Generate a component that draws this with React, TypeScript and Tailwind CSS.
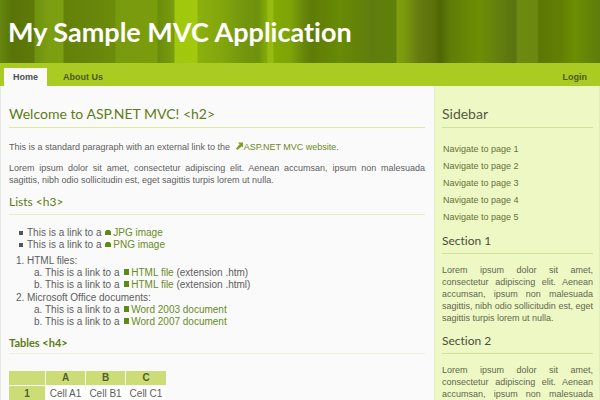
import React from "react";

type Stop = [number, string];

const stripes: Stop[] = [
  [0, "#66860e"], [6, "#5f7d0a"], [12, "#587408"], [34, "#5f7a06"],
  [35, "#6f9210"], [50, "#7c9f12"], [63, "#7c9f12"], [64, "#648208"], [90, "#67850a"], [115, "#6c8c0a"],
  [116, "#789a0e"], [157, "#7a9c0c"], [158, "#6a8c0c"], [174, "#7a9c0e"],
  [175, "#a2c80e"], [197, "#a3c90f"], [198, "#8cb00e"], [222, "#82a60c"], [240, "#76980e"], [258, "#6e900c"], [267, "#86ac04"],
  [268, "#96bc14"], [273, "#96bc14"], [274, "#82aa04"], [290, "#7ea406"],
  [304, "#66860a"], [312, "#5f7c06"], [340, "#688a04"], [372, "#5f7d0e"], [396, "#5f800a"],
  [397, "#7f9f0c"], [405, "#7a980e"], [418, "#667c10"], [434, "#5c700a"], [440, "#4e6604"], [450, "#5f7c06"],
  [480, "#6e8e04"], [500, "#627e10"], [516, "#5a7210"], [517, "#6c8a10"], [537, "#6c8810"],
  [539, "#5c7804"], [560, "#627e04"], [575, "#6c8e02"], [600, "#5e7c0a"],
];

function HeaderStripes() {
  return (
    <svg className="absolute inset-0 h-full w-full" viewBox="0 0 600 63" preserveAspectRatio="none" aria-hidden="true">
      <defs>
        <linearGradient id="stripes" x1="0" x2="1" y1="0" y2="0">
          {stripes.map(([x, color], i) => (
            <stop key={i} offset={x / 600} stopColor={color} />
          ))}
        </linearGradient>
      </defs>
      <rect width="600" height="63" fill="url(#stripes)" />
    </svg>
  );
}

function ExternalIcon() {
  return (
    <svg className="mr-px inline-block h-2 w-2 align-baseline" viewBox="0 0 8 8" aria-hidden="true">
      <path d="M3 0.500h5v5L6.700 4.200 2.500 8 1 6.700 4.600 2.300z" fill="#7aa02c" />
    </svg>
  );
}

function ImageIcon() {
  return (
    <svg className="mr-px inline-block h-2 w-2 align-baseline" viewBox="0 0 8 8" aria-hidden="true">
      <path d="M1 3.500L2.500 2h3L7 3.500V7H1z" fill="#5c8a14" />
    </svg>
  );
}

function FileIcon() {
  return (
    <svg className="mr-px inline-block h-2 w-2 align-baseline" viewBox="0 0 8 8" aria-hidden="true">
      <path d="M2 1h5v6H2z" fill="#5c8a14" />
    </svg>
  );
}

const heading = "font-['Lato',sans-serif]";
const link = "text-[#6b8a1e]";
const lorem =
  "Lorem ipsum dolor sit amet, consectetur adipiscing elit. Aenean accumsan, ipsum non malesuada sagittis, nibh odio sollicitudin est, eget sagittis turpis lorem ut nulla.";

function FileLink({ icon, label, suffix, bullet }: { icon: React.ReactNode; label: string; suffix?: string; bullet?: boolean }) {
  return (
    <li>
      {bullet && <span className="mr-1 inline-block size-1 bg-[#555] align-middle" />}
      This is a link to a{" "}
      <a href="#" className={link}>{icon}{label}</a>
      {suffix}
    </li>
  );
}

function SideSection({ title }: { title: string }) {
  return (
    <section>
      <h3 className={`${heading} border-b border-[#d2e29a] pb-1 text-xs leading-4 text-[#4a4f3a]`}>{title}</h3>
      <p className="mt-2.5 mb-[9px] text-justify">{lorem}</p>
    </section>
  );
}

export default function App() {
  return (
    <div className="flex h-screen flex-col overflow-hidden bg-[#fafafa] font-['Liberation_Sans',Arial,sans-serif] text-[9px] leading-3 text-[#5e5e5e] [font-variant-ligatures:none]">
      <header className="relative shrink-0">
        <HeaderStripes />
        <h1 className="relative px-2 pt-[14px] pb-[13px] font-['Lato',sans-serif] text-[27px] leading-9 font-bold text-white">
          My Sample MVC Application
        </h1>
      </header>
      <nav className="flex shrink-0 items-end bg-[#aacc22] pt-[5px] pr-1 pl-1 text-[9px] font-bold text-[#4d5a20]">
        <a href="#" className="bg-[#fafafa] px-[9px] py-[3px] text-[#455058]">Home</a>
        <a href="#" className="ml-[7px] px-[9px] py-[3px]">About Us</a>
        <a href="#" className="ml-auto px-[9px] py-[3px]">Login</a>
      </nav>
      <div className="flex min-h-0 flex-1 border-l border-[#e4e8e4]">
        <main className="min-w-0 flex-1 pt-[18px] pr-[9px] pl-2">
          <h2 className={`${heading} border-b border-[#dcea9e] pb-[3px] text-sm leading-5 text-[#5f7c14]`}>
            Welcome to ASP.NET MVC! &lt;h2&gt;
          </h2>
          <p className="mt-[13px]">
            This is a standard paragraph with an external link to the{" "}
            <a href="#" className={`ml-0.5 ${link}`}><ExternalIcon />ASP.NET MVC website</a>.
          </p>
          <p className="mt-[9px] text-justify">{lorem}</p>
          <h3 className={`${heading} mt-2 border-b border-[#e6efc4] pb-1 text-xs leading-4 text-[#5f7c14]`}>
            Lists &lt;h3&gt;
          </h3>
          <div className="text-[10px]">
            <ul className="mt-3 pl-2.5">
              <FileLink bullet icon={<ImageIcon />} label="JPG image" />
              <FileLink bullet icon={<ImageIcon />} label="PNG image" />
            </ul>
            <ol className="mt-1 list-decimal pl-[18px]">
              <li>
                HTML files:
                <ol className="mb-px list-[lower-alpha] pl-[18px]">
                  <FileLink icon={<FileIcon />} label="HTML file" suffix=" (extension .htm)" />
                  <FileLink icon={<FileIcon />} label="HTML file" suffix=" (extension .html)" />
                </ol>
              </li>
              <li>
                Microsoft Office documents:
                <ol className="list-[lower-alpha] pl-[18px]">
                  <FileLink icon={<FileIcon />} label="Word 2003 document" />
                  <FileLink icon={<FileIcon />} label="Word 2007 document" />
                </ol>
              </li>
            </ol>
          </div>
          <h4 className="mt-[7px] border-b border-[#eef2e0] pb-0.5 font-['Lato',sans-serif] text-[11px] leading-4 font-bold text-[#5f7c14]">
            Tables &lt;h4&gt;
          </h4>
          <table className="mt-4 -ml-px border-separate border-spacing-px text-center text-[10px]">
            <thead>
              <tr className="bg-[#ccdd77] text-[#555e33]">
                <td className="w-9" />
                <th scope="col" className="w-[39px] py-px">A</th>
                <th scope="col" className="w-[39px]">B</th>
                <th scope="col" className="w-10">C</th>
              </tr>
            </thead>
            <tbody>
              <tr>
                <th scope="row" className="bg-[#ccdd77] py-0.5 text-[#555e33]">1</th>
                <td className="bg-white">Cell A1</td>
                <td className="bg-white">Cell B1</td>
                <td className="bg-white">Cell C1</td>
              </tr>
            </tbody>
          </table>
        </main>
        <aside className="w-[166px] shrink-0 border-r border-l border-[#e2edbb] bg-[#eef8c4] pt-[18px] pr-1.5 pl-[7px] text-[#626750]">
          <h2 className={`${heading} border-b border-[#d2e29a] pb-[3px] text-sm leading-5 text-[#555b44]`}>Sidebar</h2>
          <ul className="mt-[13px] mb-[7px] pl-px">
            {[1, 2, 3, 4, 5].map((n) => (
              <li key={n} className="leading-[17px]">
                <a href="#" className="text-[#64723a]">Navigate to page {n}</a>
              </li>
            ))}
          </ul>
          <SideSection title="Section 1" />
          <SideSection title="Section 2" />
        </aside>
      </div>
    </div>
  );
}
